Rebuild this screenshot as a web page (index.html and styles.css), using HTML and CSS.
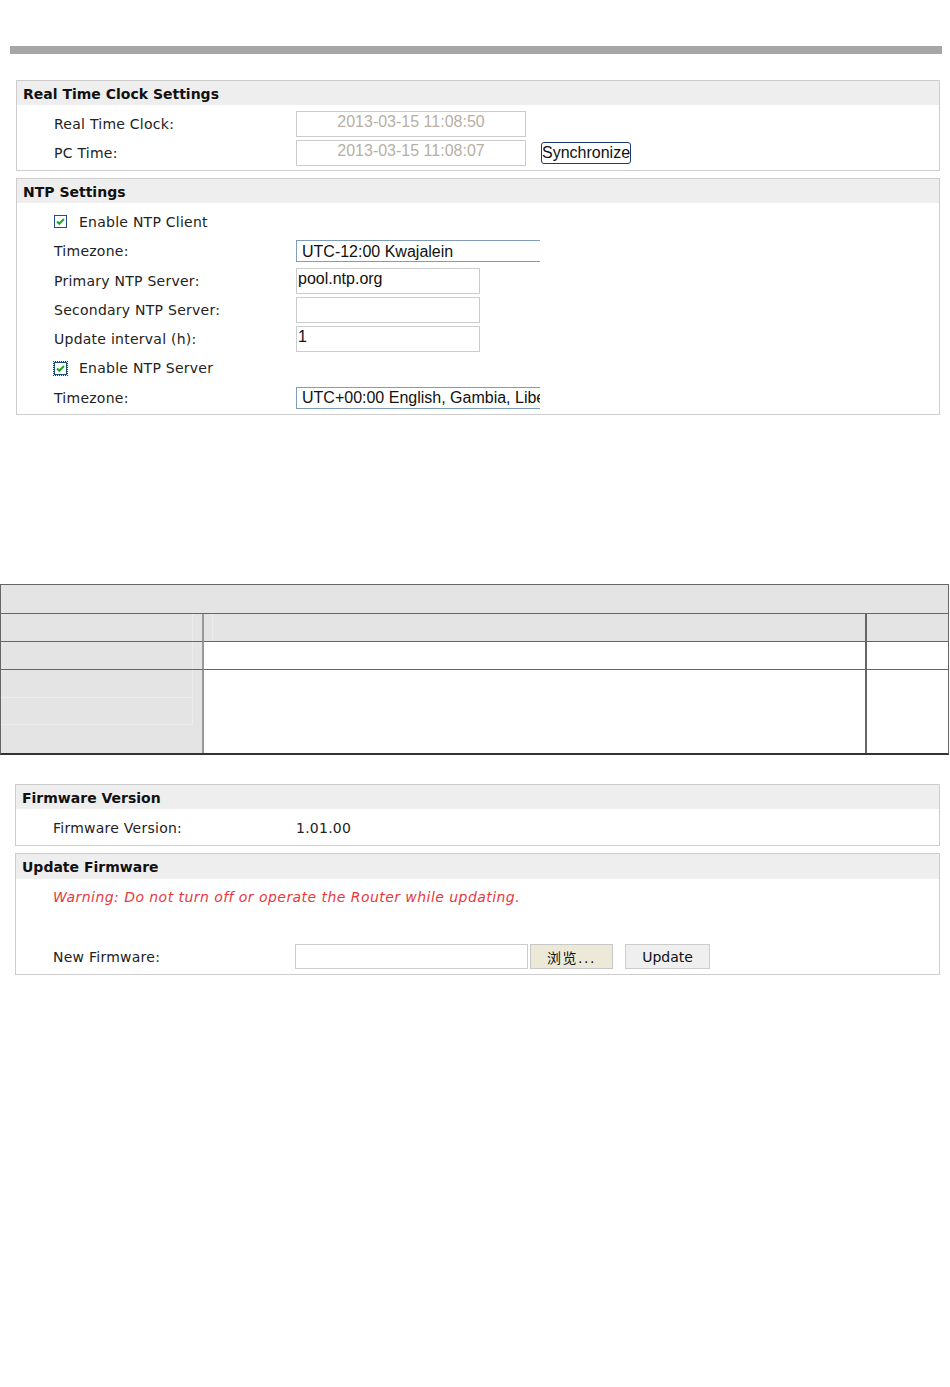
FILE: index.html
```html
<!DOCTYPE html>
<html lang="en">
<head>
    <meta charset="UTF-8">
    <title>System Settings</title>
    <link rel="stylesheet" href="styles.css">
</head>
<body>
    <div class="top-bar"></div>

    <!-- clock -->
    <div class="panel panel-top">
        <div class="panel-head">Real Time Clock Settings</div>
        <div class="panel-body">
            <div class="row">
                <span class="label">Real Time Clock:</span>
                <div class="field"><input class="time-box" type="text" value="2013-03-15 11:08:50" readonly></div>
            </div>
            <div class="row">
                <span class="label">PC Time:</span>
                <div class="field">
                    <input class="time-box" type="text" value="2013-03-15 11:08:07" readonly>
                    <button class="btn-sync">Synchronize</button>
                </div>
            </div>
        </div>
    </div>

    <!-- ntp -->
    <div class="panel panel-ntp">
        <div class="panel-head">NTP Settings</div>
        <div class="panel-body">
            <div class="row">
                <label class="check-line">
                    <span class="check"><svg width="11" height="11" viewBox="0 0 11 11"><path d="M2 5.5 L4.3 7.8 L9 3" fill="none" stroke="#22a52a" stroke-width="2"/></svg></span>
                    Enable NTP Client
                </label>
            </div>
            <div class="row row-30">
                <span class="label">Timezone:</span>
                <div class="field"><div class="select-clip"><select class="zone"><option>UTC-12:00 Kwajalein</option></select></div></div>
            </div>
            <div class="row">
                <span class="label">Primary NTP Server:</span>
                <div class="field"><input class="text-box" type="text" value="pool.ntp.org"></div>
            </div>
            <div class="row">
                <span class="label">Secondary NTP Server:</span>
                <div class="field"><input class="text-box" type="text" value=""></div>
            </div>
            <div class="row">
                <span class="label">Update interval (h):</span>
                <div class="field"><input class="text-box" type="text" value="1"></div>
            </div>
            <div class="row row-30">
                <label class="check-line">
                    <span class="check focused"><svg width="11" height="11" viewBox="0 0 11 11"><path d="M2 5.5 L4.3 7.8 L9 3" fill="none" stroke="#22a52a" stroke-width="2"/></svg></span>
                    Enable NTP Server
                </label>
            </div>
            <div class="row">
                <span class="label">Timezone:</span>
                <div class="field"><div class="select-clip"><select class="zone"><option>UTC+00:00 English, Gambia, Liberia, Morocco</option></select></div></div>
            </div>
        </div>
    </div>

    <!-- empty grid -->
    <div class="grid">
        <div class="cap"></div>
        <div class="cell key"><span class="ghost"></span></div>
        <div class="cell mid gray"><span class="ghost-left"></span></div>
        <div class="cell end gray"></div>
        <div class="cell key"><span class="ghost"></span></div>
        <div class="cell mid"></div>
        <div class="cell end"></div>
        <div class="cell key tall">
            <span class="ghost sub"></span>
            <span class="ghost sub"></span>
            <span class="sub"></span>
        </div>
        <div class="cell mid tall"></div>
        <div class="cell end tall"></div>
    </div>

    <!-- firmware -->
    <div class="panel panel-fw">
        <div class="panel-head">Firmware Version</div>
        <div class="panel-body">
            <div class="row">
                <span class="label">Firmware Version:</span>
                <span class="value">1.01.00</span>
            </div>
        </div>
    </div>

    <div class="panel panel-update">
        <div class="panel-head tall-head">Update Firmware</div>
        <div class="panel-body">
            <div class="row warn">Warning: Do not turn off or operate the Router while updating.</div>
            <div class="row"></div>
            <div class="row file-row">
                <span class="label">New Firmware:</span>
                <div class="field">
                    <span class="file-box"></span>
                    <button class="btn-browse">浏览...</button>
                    <button class="btn-update">Update</button>
                </div>
            </div>
        </div>
    </div>
</body>
</html>
```

FILE: styles.css
```css
* {
    box-sizing: border-box;
}

body {
    margin: 0;
    background: #fff;
    font-family: 'DejaVu Sans', Verdana, sans-serif;
    font-size: 14px;
    letter-spacing: 0.25px;
    color: #222;
}

.top-bar {
    margin: 46px 0 0 10px;
    width: 932px;
    height: 8px;
    background: #a6a6a6;
}

.panel {
    border: 1px solid #cdcdcd;
    margin-left: 16px;
    width: 924px;
}

.panel-top {
    margin-top: 26px;
}

.panel-ntp {
    margin-top: 7px;
}

.panel-fw {
    margin-top: 29px;
    margin-left: 15px;
    width: 925px;
}

.panel-update {
    margin-top: 7px;
    margin-left: 15px;
    width: 925px;
}

.panel-head {
    background: #eee;
    height: 24px;
    line-height: 26px;
    padding-left: 6px;
    font-weight: bold;
    font-size: 14px;
    letter-spacing: 0;
    color: #111;
}

.tall-head {
    height: 25px;
}

.panel-body {
    padding: 4px 0 3px;
}

.panel-ntp .panel-body,
.panel-update .panel-body {
    padding-bottom: 2px;
}

.row {
    display: grid;
    grid-template-columns: 279px 1fr;
    align-items: center;
    height: 29px;
}

.row-30 {
    height: 30px;
}

.label {
    padding-left: 37px;
}

.value {
    padding-left: 1px;
}

.field {
    display: flex;
    align-items: center;
}

.time-box {
    width: 230px;
    height: 26px;
    border: 1px solid #ccc;
    padding: 0 0 4px;
    text-align: center;
    font-family: 'Liberation Sans', Arial, sans-serif;
    font-size: 16px;
    letter-spacing: 0;
    color: #b7afa4;
    background: #fff;
    outline: none;
}

.btn-sync {
    margin-left: 15px;
    margin-top: 1px;
    width: 90px;
    height: 22px;
    padding: 0;
    border: 1px solid #1c3b6b;
    border-radius: 3px;
    background: #fff;
    font-family: 'Liberation Sans', Arial, sans-serif;
    font-size: 16px;
    letter-spacing: 0;
    color: #111;
    line-height: 20px;
}

.check-line {
    grid-column: 1 / 3;
    display: flex;
    align-items: center;
    gap: 12px;
    padding-left: 37px;
}

.check {
    width: 13px;
    height: 13px;
    border: 1px solid #1c5180;
    background: #fff;
    display: inline-flex;
    align-items: center;
    justify-content: center;
}

.check.focused {
    outline: 1px dotted #333;
    outline-offset: 0;
}

.select-clip {
    width: 244px;
    height: 22px;
    overflow: hidden;
}

.zone {
    appearance: none;
    -webkit-appearance: none;
    width: 320px;
    height: 22px;
    border: 1px solid #7f9db9;
    border-radius: 0;
    padding: 0 0 0 5px;
    background: #fff;
    font-family: 'Liberation Sans', Arial, sans-serif;
    font-size: 16px;
    color: #111;
}

.text-box {
    width: 184px;
    height: 26px;
    border: 1px solid #ccc;
    padding: 0 1px 3px;
    font-family: 'Liberation Sans', Arial, sans-serif;
    font-size: 16px;
    letter-spacing: 0;
    color: #111;
    outline: none;
}

/* empty table */
.grid {
    margin-top: 169px;
    width: 949px;
    display: grid;
    grid-template-columns: 203px 663px 1fr;
    border: 1px solid #666;
    border-bottom: 2px solid #333;
}

.cap {
    grid-column: 1 / 4;
    height: 29px;
    background: #e4e4e4;
    border-bottom: 1px solid #666;
}

.cell {
    height: 28px;
    border-bottom: 1px solid #666;
}

.cell.tall {
    height: 83px;
    border-bottom: none;
}

.key {
    background: #e4e4e4;
    border-right: 2px solid #999;
    display: flex;
    flex-direction: column;
}

.mid {
    border-right: 2px solid #666;
}

.gray {
    background: #e4e4e4;
}

.ghost {
    display: block;
    height: 100%;
    margin-right: 9px;
    border-right: 1px solid #ececec;
}

.ghost-left {
    display: block;
    height: 100%;
    margin-left: 8px;
    border-left: 1px solid #ececec;
}

.sub {
    display: block;
    height: 28px;
    border-bottom: 1px solid #ececec;
}

.sub:last-child {
    border-bottom: none;
}

/* update */
.warn {
    display: block;
    line-height: 29px;
    padding-left: 37px;
    font-style: italic;
    letter-spacing: 0.45px;
    color: #e8383d;
}

.file-row {
    height: 31px;
}

.file-box {
    display: block;
    width: 233px;
    height: 25px;
    border: 1px solid #ccc;
    background: #fff;
}

.btn-browse {
    margin-left: 2px;
    width: 83px;
    height: 25px;
    padding: 0;
    border: 1px solid #c8c8c8;
    background: #ece9d8;
    font-family: 'DejaVu Sans', 'Noto Sans CJK SC', sans-serif;
    font-size: 14px;
    color: #111;
    letter-spacing: 1.5px;
}

.btn-update {
    margin-left: 12px;
    width: 85px;
    height: 25px;
    padding: 0;
    border: 1px solid #ccc;
    background: #efefef;
    font-family: 'DejaVu Sans', Verdana, sans-serif;
    font-size: 14px;
    letter-spacing: 0;
    color: #111;
}
```
